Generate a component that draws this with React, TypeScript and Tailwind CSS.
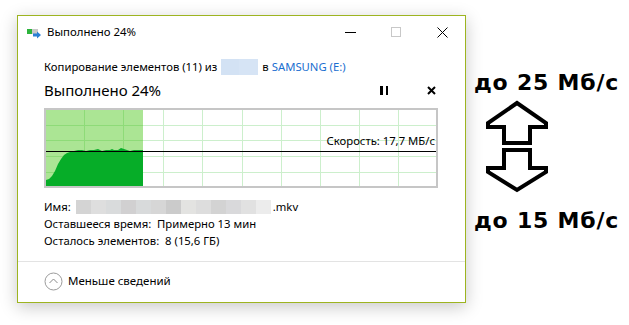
import React from "react";

const font = { fontFamily: '"Noto Sans", "Open Sans", sans-serif' };

function TitleIcon() {
  return (
    <svg width="16" height="12" viewBox="0 0 16 12">
      <rect x="0" y="2" width="11" height="5" fill="#c9c9c9" />
      <rect x="0" y="2" width="5" height="5" fill="#2db43c" />
      <path d="M6 6.5 H10 V4.5 L14 8 L10 11.5 V9.5 H6 Z" fill="#2a7fd4" />
    </svg>
  );
}

function Chart() {
  const vx = [38, 77, 117, 156, 196, 235, 274, 313, 352];
  const hy = [15, 30, 46, 62];
  const area =
    "M0 76 L0 70 L3 69 L6 66 L9 61 L12 54 L15 49 L18 45 L21 43 L24 42 L28 41 L32 40 L36 40 L40 41 L44 40 L48 40 L52 39 L56 41 L60 40 L64 40 L66 39 L68 40 L72 40 L75 38 L78 39 L81 40 L84 41 L88 40 L92 40 L95 40 L97 40 L97 76 Z";
  return (
    <svg width="390" height="76" viewBox="0 0 390 76" className="block">
      <rect x="0" y="0" width="97" height="76" fill="#abe594" />
      {vx.map((x) => (
        <line key={"v" + x} x1={x + 0.5} y1="0" x2={x + 0.5} y2="76" stroke={x < 97 ? "#8edb78" : "#ccefcc"} strokeWidth="1" />
      ))}
      {hy.map((y) => (
        <React.Fragment key={"h" + y}>
          <line x1="0" y1={y + 0.5} x2="97" y2={y + 0.5} stroke="#8edb78" strokeWidth="1" />
          <line x1="97" y1={y + 0.5} x2="390" y2={y + 0.5} stroke="#ccefcc" strokeWidth="1" />
        </React.Fragment>
      ))}
      <path d={area} fill="#06ad28" />
      <line x1="0" y1="41.5" x2="390" y2="41.5" stroke="#000" strokeWidth="1" />
    </svg>
  );
}

const blurBlocks = ["#d4d4d4", "#dedede", "#d9dbdc", "#d1d0d1", "#d8dadb", "#d6d6d6", "#cbcbcb", "#e3e3e1", "#dddddd", "#d3d3d3", "#d9d9db", "#e1e1e1", "#ececec"];

export default function App() {
  return (
    <div className="w-[629px] h-[325px] bg-white flex items-start overflow-hidden" style={font}>
      <div className="ml-[17px] mt-[15px] w-[449px] h-[288px] border border-[#9db420] bg-white flex flex-col shadow-[0_4px_16px_rgba(0,0,0,0.22)] text-[11.3px] text-black leading-none">
        {/* title bar */}
        <div className="h-[32px] flex items-center">
          <div className="ml-[9px] mt-[1px]"><TitleIcon /></div>
          <span className="ml-[4px] text-[11.4px]">Выполнено 24%</span>
          <div className="ml-auto flex items-center h-full">
            <div className="w-[46px] flex justify-center"><div className="w-[11px] h-px bg-black" /></div>
            <div className="w-[46px] flex justify-center"><div className="w-[10px] h-[10px] border border-[#c8c8c8]" /></div>
            <div className="w-[46px] flex justify-center">
              <svg width="11" height="11" viewBox="0 0 11 11"><path d="M0.5 0.5 L10.5 10.5 M10.5 0.5 L0.5 10.5" stroke="#000" strokeWidth="1" /></svg>
            </div>
          </div>
        </div>
        {/* content */}
        <div className="pl-[26px] pr-[28px] flex flex-col">
          <div className="mt-[10px] h-[17px] flex items-center">
            <span>Копирование элементов (11) из</span>
            <span className="ml-[4px] w-[37px] h-[16px] bg-[#d6e4f5] flex"><span className="w-[18px] bg-[#d3e2f4]" /></span>
            <span className="ml-[4px]">в</span>
            <span className="ml-[3px] text-[#1a6ed0]">SAMSUNG (E:)</span>
          </div>
          <div className="mt-[4px] h-[22px] flex items-center">
            <span className="text-[15px]">Выполнено 24%</span>
            <div className="ml-auto flex items-center">
              <div className="flex gap-[3px]"><div className="w-[2.5px] h-[9px] bg-black" /><div className="w-[2.5px] h-[9px] bg-black" /></div>
              <div className="ml-[39px] mr-[1px]">
                <svg width="9" height="9" viewBox="0 0 9 9"><path d="M1 1 L8 8 M8 1 L1 8" stroke="#000" strokeWidth="2" /></svg>
              </div>
            </div>
          </div>
          <div className="mt-[7px] w-[394px] border-2 border-[#c6c6c6] relative">
            <Chart />
            <span className="absolute right-[1px] top-[25px] text-[11.3px] leading-none">Скорость: 17,7 МБ/с</span>
          </div>
          <div className="mt-[10px] flex flex-col">
            <div className="h-[17px] flex items-center">
              <span>Имя:</span>
              <span className="ml-[5px] flex h-[14px]">
                {blurBlocks.map((c, i) => (
                  <span key={i} className="w-[15px] h-full" style={{ backgroundColor: c }} />
                ))}
              </span>
              <span className="ml-[2px]">.mkv</span>
            </div>
            <div className="h-[17px] flex items-center">Оставшееся время:&nbsp; Примерно 13 мин</div>
            <div className="h-[17px] flex items-center">Осталось элементов:&nbsp; 8 (15,6 ГБ)</div>
          </div>
        </div>
        <div className="mt-[12px] h-px bg-[#e3e3e3]" />
        <div className="flex-1 flex items-center pl-[26px] pb-[2px]">
          <svg width="19" height="19" viewBox="0 0 19 19">
            <circle cx="9.5" cy="9.5" r="8.5" fill="none" stroke="#9b9b9b" strokeWidth="1" />
            <path d="M5.5 11 L9.5 7 L13.5 11" fill="none" stroke="#8a8a8a" strokeWidth="1" />
          </svg>
          <span className="ml-[5px] text-[11.5px]">Меньше сведений</span>
        </div>
      </div>
      <div className="ml-[8px] mt-[68px] flex flex-col" style={{ fontFamily: '"DejaVu Sans", sans-serif' }}>
        <div className="h-[28px] flex items-center text-[22px] font-bold tracking-[0.8px] whitespace-nowrap">до 25 Мб/с</div>
        <div className="ml-[6px] mt-[2px]">
          <svg width="75" height="96" viewBox="0 0 75 96" className="block">
            <path d="M37 5 L8 25 L8 29 L24 29 L24 45 L50 45 L50 29 L66 29 L66 25 Z" fill="none" stroke="#000" strokeWidth="4" strokeLinejoin="miter" />
            <path d="M24 52 L50 52 L50 70 L66 70 L66 74 L37 92 L8 74 L8 70 L24 70 Z" fill="none" stroke="#000" strokeWidth="4" strokeLinejoin="miter" />
          </svg>
        </div>
        <div className="mt-[12px] h-[28px] flex items-center text-[22px] font-bold tracking-[0.8px] whitespace-nowrap">до 15 Мб/с</div>
      </div>
    </div>
  );
}
